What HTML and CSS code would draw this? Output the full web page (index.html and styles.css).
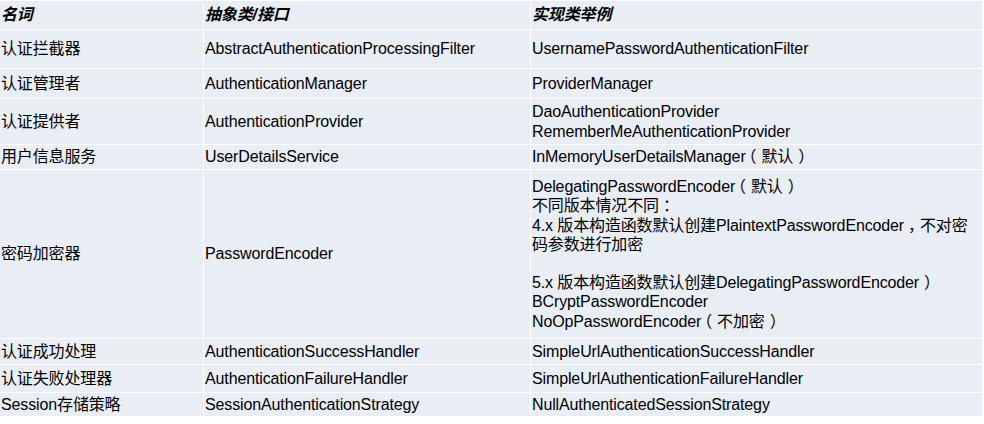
FILE: index.html
```html
<!DOCTYPE html>
<html lang="zh-CN">
<head>
<meta charset="utf-8">
<title>Spring Security 组件</title>
<link rel="stylesheet" href="styles.css">
</head>
<body>
<div class="table">
  <div class="cell head">名词</div>
  <div class="cell head">抽象类/接口</div>
  <div class="cell head">实现类举例</div>

  <div class="cell">认证拦截器</div>
  <div class="cell">AbstractAuthenticationProcessingFilter</div>
  <div class="cell">UsernamePasswordAuthenticationFilter</div>

  <div class="cell">认证管理者</div>
  <div class="cell">AuthenticationManager</div>
  <div class="cell">ProviderManager</div>

  <div class="cell">认证提供者</div>
  <div class="cell">AuthenticationProvider</div>
  <div class="cell"><div>DaoAuthenticationProvider<br>RememberMeAuthenticationProvider</div></div>

  <div class="cell">用户信息服务</div>
  <div class="cell">UserDetailsService</div>
  <div class="cell"><div>InMemoryUserDetailsManager<span class="po">（</span>默认<span class="pc">）</span></div></div>

  <div class="cell">密码加密器</div>
  <div class="cell">PasswordEncoder</div>
  <div class="cell"><div>DelegatingPasswordEncoder<span class="po">（</span>默认<span class="pc">）</span><br>不同版本情况不同<span class="pm">：</span><br>4.x 版本构造函数默认创建PlaintextPasswordEncoder<span class="pm">，</span>不对密<br>码参数进行加密<br><br>5.x 版本构造函数默认创建DelegatingPasswordEncoder<span class="pc">）</span><br>BCryptPasswordEncoder<br>NoOpPasswordEncoder<span class="po">（</span>不加密<span class="pc">）</span></div></div>

  <div class="cell">认证成功处理</div>
  <div class="cell">AuthenticationSuccessHandler</div>
  <div class="cell">SimpleUrlAuthenticationSuccessHandler</div>

  <div class="cell">认证失败处理器</div>
  <div class="cell">AuthenticationFailureHandler</div>
  <div class="cell">SimpleUrlAuthenticationFailureHandler</div>

  <div class="cell">Session存储策略</div>
  <div class="cell">SessionAuthenticationStrategy</div>
  <div class="cell">NullAuthenticatedSessionStrategy</div>
</div>
</body>
</html>
```

FILE: styles.css
```css
html, body {
  margin: 0;
  padding: 0;
  background: #ffffff;
}

body {
  padding-top: 1px;
  font-family: "Liberation Sans", "Noto Sans CJK SC", sans-serif;
  font-size: 16px;
  line-height: 19.2px;
  letter-spacing: -0.13px;
  color: #000000;
}

.table {
  width: 982px;
  display: grid;
  grid-template-columns: 203px 326px 1fr;
  grid-template-rows: 28px 38px 29px 45px 24px 168px 25px 27px 23px;
  gap: 1px;
  background: #ffffff;
}

.cell {
  background: #e9edf4;
  padding-left: 1px;
  display: flex;
  flex-direction: column;
  justify-content: center;
  white-space: nowrap;
  overflow: hidden;
}

/* full-width punctuation drawn centred in its em box */
.po {
  margin-left: -5px;
  margin-right: 5px;
}

.pc {
  margin-left: 5px;
  margin-right: -5px;
}

.pm {
  margin-left: 4px;
  margin-right: -4px;
}

.head {
  font-weight: bold;
  font-style: italic;
}
```
